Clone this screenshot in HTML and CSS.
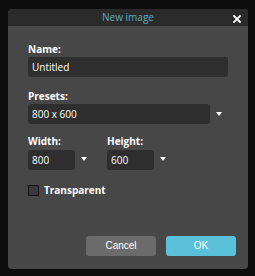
FILE: index.html
```html
<!DOCTYPE html>
<html>
<head>
<meta charset="utf-8">
<link rel="stylesheet" href="styles.css">
</head>
<body>
<div class="dialog">
  <div class="header">
    <span class="title">New image</span>
    <svg class="close" width="8" height="8" viewBox="0 0 8 8"><path d="M1 1L7 7M7 1L1 7" stroke="#fff" stroke-width="1.8" stroke-linecap="square"/></svg>
  </div>
  <div class="content">
    <div class="label l-name">Name:</div>
    <div class="input wide">Untitled</div>
    <div class="label l-presets">Presets:</div>
    <div class="row">
      <div class="input select">800 x 600</div>
      <span class="arrow"></span>
    </div>
    <div class="dims">
      <div class="dim">
        <div class="label">Width:</div>
        <div class="row">
          <div class="input small">800</div>
          <span class="arrow"></span>
        </div>
      </div>
      <div class="dim">
        <div class="label">Height:</div>
        <div class="row">
          <div class="input small">600</div>
          <span class="arrow"></span>
        </div>
      </div>
    </div>
    <div class="check">
      <span class="box"></span>
      <span class="check-label">Transparent</span>
    </div>
  </div>
  <div class="buttons">
    <div class="btn cancel">Cancel</div>
    <div class="btn ok">OK</div>
  </div>
</div>
</body>
</html>
```

FILE: styles.css
```css
html, body {
  margin: 0;
  padding: 0;
  background: #0d0d0d;
  width: 255px;
  height: 276px;
  overflow: hidden;
}
body {
  padding-top: 9px;
  padding-left: 8px;
  box-sizing: border-box;
  font-family: "Open Sans", "DejaVu Sans", sans-serif;
}
.dialog {
  width: 240px;
  height: 260px;
  background: #474747;
  border-radius: 4px;
  overflow: hidden;
  display: flex;
  flex-direction: column;
}
.header {
  height: 17px;
  background: #2a2a2a;
  position: relative;
  display: flex;
  align-items: center;
  justify-content: center;
}
.title {
  color: #5aaebd;
  font-size: 10px;
  line-height: 17px;
}
.close {
  position: absolute;
  right: 7px;
  top: 6px;
}
.content {
  padding: 17px 0 0 20px;
  flex: 1;
}
.label {
  color: #ffffff;
  font-size: 10px;
  font-weight: bold;
  line-height: 13px;
  height: 13px;
}
.l-presets {
  margin-top: 13px;
}
.input {
  background: #2e2e2e;
  border-radius: 3px;
  color: #ffffff;
  font-size: 10px;
  line-height: 20px;
  height: 20px;
  padding-left: 4px;
  box-sizing: border-box;
  margin-top: 1px;
}
.wide {
  width: 200px;
}
.row {
  display: flex;
  align-items: center;
}
.select {
  width: 182px;
}
.arrow {
  width: 0;
  height: 0;
  border-left: 3.5px solid transparent;
  border-right: 3.5px solid transparent;
  border-top: 4px solid #ffffff;
  margin-left: 6px;
  margin-top: 1px;
}
.dims {
  display: flex;
  gap: 20px;
  margin-top: 11px;
}
.dims .row .input {
  margin-top: 2px;
}
.dims .arrow {
  margin-top: 0px;
}
.small {
  width: 47px;
}
.check {
  display: flex;
  align-items: center;
  margin-top: 13px;
}
.box {
  width: 9px;
  height: 9px;
  border: 1px solid #111;
  background: #3a3a3a;
}
.check-label {
  color: #ffffff;
  font-size: 10px;
  font-weight: bold;
  margin-left: 5px;
}
.buttons {
  display: flex;
  justify-content: flex-end;
  gap: 10px;
  padding: 0 12px 13px 0;
}
.btn {
  width: 70px;
  height: 20px;
  border-radius: 3px;
  color: #ffffff;
  font-family: "Liberation Sans", Arial, sans-serif;
  font-size: 10px;
  line-height: 20px;
  text-align: center;
}
.cancel {
  background: #6b6b6b;
}
.ok {
  background: #5bc0d9;
}
```
